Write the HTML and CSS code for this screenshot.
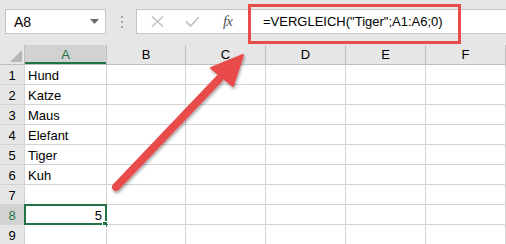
FILE: index.html
```html
<!DOCTYPE html>
<html lang="de">
<head>
    <meta charset="UTF-8">
    <title>VERGLEICH</title>
    <link rel="stylesheet" href="styles.css">
</head>
<body>
    <div class="toolbar">
        <div class="namebox">
            <span>A8</span>
            <svg class="drop" width="9" height="5" viewBox="0 0 9 5"><path d="M0 0H9L4.5 5Z" fill="#6b6b6b"/></svg>
        </div>
        <div class="dots"><i></i><i></i><i></i></div>
        <div class="formulabar">
            <div class="fbuttons">
                <svg width="13" height="11" viewBox="0 0 13 11"><path d="M1 0.5L12 10.5M12 0.5L1 10.5" stroke="#c4c4c4" stroke-width="1.6"/></svg>
                <svg width="15" height="11" viewBox="0 0 15 11"><path d="M1 5.5L5.5 10L14 1" stroke="#c4c4c4" stroke-width="1.8" fill="none"/></svg>
                <i class="fx">fx</i>
            </div>
            <div class="input">=VERGLEICH("Tiger";A1:A6;0)</div>
        </div>
        <!-- Markierung um die Formel -->
        <div class="mark"></div>
    </div>

    <div class="colhead">
        <div class="corner">
            <svg width="24" height="19" viewBox="0 0 24 19"><path d="M10 17H22V5Z" fill="#b6b6b6"/></svg>
        </div>
        <div class="active">A</div>
        <div>B</div>
        <div>C</div>
        <div>D</div>
        <div>E</div>
        <div>F</div>
    </div>

    <div class="sheet">
        <div class="rh">1</div><div>Hund</div><div></div><div></div><div></div><div></div><div></div>
        <div class="rh">2</div><div>Katze</div><div></div><div></div><div></div><div></div><div></div>
        <div class="rh">3</div><div>Maus</div><div></div><div></div><div></div><div></div><div></div>
        <div class="rh">4</div><div>Elefant</div><div></div><div></div><div></div><div></div><div></div>
        <div class="rh">5</div><div>Tiger</div><div></div><div></div><div></div><div></div><div></div>
        <div class="rh">6</div><div>Kuh</div><div></div><div></div><div></div><div></div><div></div>
        <div class="rh">7</div><div></div><div></div><div></div><div></div><div></div><div></div>
        <div class="rh active">8</div><div class="selected num">5<span class="handle"></span></div><div></div><div></div><div></div><div></div><div></div>
        <div class="rh">9</div><div></div><div></div><div></div><div></div><div></div><div></div>
    </div>

    <!-- Pfeil auf die Formel -->
    <svg class="arrow" width="506" height="244" viewBox="0 0 506 244">
        <defs>
            <filter id="shadow" x="-20%" y="-20%" width="140%" height="140%">
                <feDropShadow dx="1" dy="2" stdDeviation="1.5" flood-color="#000" flood-opacity="0.35"/>
            </filter>
        </defs>
        <g filter="url(#shadow)">
            <line x1="116" y1="187" x2="219" y2="79" stroke="#e84c4a" stroke-width="8" stroke-linecap="round"/>
            <path d="M243 55L211 68L233 86Z" fill="#e84c4a" stroke="#e84c4a" stroke-width="2" stroke-linejoin="round"/>
        </g>
    </svg>
</body>
</html>
```

FILE: styles.css
```css
body {
    margin: 0;
    width: 506px;
    height: 244px;
    overflow: hidden;
    background-color: #fff;
    font-family: "Liberation Sans", Arial, sans-serif;
    font-size: 13px;
    color: #000;
    position: relative;
}

.toolbar {
    display: flex;
    align-items: flex-start;
    height: 45px;
    padding-top: 9px;
    box-sizing: border-box;
    background-color: #e6e6e6;
    position: relative;
}

.namebox {
    display: flex;
    align-items: center;
    justify-content: space-between;
    width: 101px;
    height: 25px;
    margin-left: 5px;
    padding: 0 6px 0 8px;
    box-sizing: border-box;
    background-color: #fff;
    border: 1px solid #c6c6c6;
    font-size: 14px;
}

.dots {
    display: flex;
    flex-direction: column;
    gap: 3px;
    margin: 7px 13px 0 15px;
}

.dots i {
    width: 2px;
    height: 2px;
    background-color: #a6a6a6;
}

.formulabar {
    display: flex;
    flex: 1;
    height: 25px;
    box-sizing: border-box;
    background-color: #fff;
    border: 1px solid #c6c6c6;
    border-right: none;
}

.fbuttons {
    display: flex;
    align-items: center;
    width: 109px;
    padding-left: 14px;
    box-sizing: border-box;
}

.fbuttons svg:first-child {
    margin-right: 21px;
}

.fbuttons svg:nth-child(2) {
    margin-right: 23px;
}

.fx {
    font-family: "Liberation Serif", "Times New Roman", serif;
    font-size: 15px;
    color: #555;
    letter-spacing: -1px;
}

.input {
    padding-left: 17px;
    line-height: 23px;
    font-size: 13px;
    white-space: nowrap;
}

.mark {
    position: absolute;
    left: 248px;
    top: 4px;
    width: 213px;
    height: 40px;
    box-sizing: border-box;
    border: 3px solid #e84c4a;
}

.colhead {
    display: grid;
    grid-template-columns: 24px 81px 78px 79px 79px 79px 79px;
    gap: 1px;
    padding: 0 1px 1px 0;
    width: 506px;
    box-sizing: border-box;
    background-color: #bfbfbf;
}

.colhead div {
    height: 19px;
    line-height: 19px;
    text-align: center;
    background-color: #e6e6e6;
    font-size: 13px;
}

.colhead .corner svg {
    display: block;
}

.colhead .active {
    height: 17px;
    background-color: #d2d2d2;
    border-bottom: 2px solid #217346;
    color: #217346;
}

.sheet {
    display: grid;
    grid-template-columns: 24px 81px 78px 79px 79px 79px 79px;
    grid-auto-rows: 19px;
    gap: 1px;
    padding: 0 1px 1px 0;
    width: 506px;
    box-sizing: border-box;
    background-color: #d4d4d4;
}

.sheet div {
    background-color: #fff;
    line-height: 21px;
    padding-left: 3px;
    white-space: nowrap;
    overflow: visible;
    position: relative;
}

.sheet .rh {
    padding-left: 0;
    text-align: center;
    background-color: #e6e6e6;
}

.sheet .rh.active {
    background-color: #d2d2d2;
    color: #217346;
}

.sheet .num {
    text-align: right;
    padding: 0 4px 0 0;
}

.selected {
    outline: 2px solid #217346;
    outline-offset: -1px;
}

.handle {
    position: absolute;
    right: -3px;
    bottom: -4px;
    width: 5px;
    height: 5px;
    background-color: #217346;
    border: 1px solid #fff;
}

.arrow {
    position: absolute;
    left: 0;
    top: 0;
    pointer-events: none;
}
```
